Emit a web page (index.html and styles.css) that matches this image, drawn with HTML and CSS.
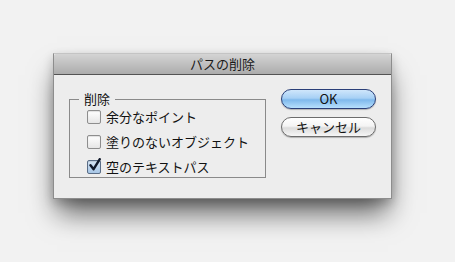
FILE: index.html
```html
<!DOCTYPE html>
<html lang="ja">
  <head>
    <meta charset="UTF-8" />
    <title>パスの削除</title>
    <link rel="stylesheet" href="styles.css">
  </head>
  <body>
    <div class="dialog">
      <div class="titlebar">パスの削除</div>
      <div class="content">
        <fieldset class="group">
          <legend>削除</legend>
          <label class="option"><span class="box"></span>余分なポイント</label>
          <label class="option"><span class="box"></span>塗りのないオブジェクト</label>
          <label class="option"><span class="box checked">
            <svg viewBox="0 0 14 14"><path d="M2.5 7.2 L5.6 11.2 L11.8 1.2" /></svg>
          </span>空のテキストパス</label>
        </fieldset>
        <div class="buttons">
          <button class="btn btn-default">OK</button>
          <button class="btn">キャンセル</button>
        </div>
      </div>
    </div>
  </body>
</html>
```

FILE: styles.css
```css
/* Reset */
* {
  box-sizing: border-box;
  margin: 0;
  padding: 0;
}
html,
body {
  height: 100%;
}
body {
  background: #f2f2f2;
  font-family: "Noto Sans CJK JP", "Liberation Sans", sans-serif;
  font-size: 13px;
  color: #111;
  padding: 53px 0 0 53px;
}

/* Dialog window */
.dialog {
  width: 339px;
  height: 146px;
  background: #ededed;
  border: 1px solid #8d8d8d;
  border-top-color: #c4c4c4;
  box-shadow: 0 18px 26px -4px rgba(0, 0, 0, 0.6), 0 4px 10px rgba(0, 0, 0, 0.2);
  display: flex;
  flex-direction: column;
}
.titlebar {
  height: 21px;
  line-height: 20px;
  text-align: center;
  font-size: 13px;
  color: #1a1a1a;
  background: linear-gradient(#d4d4d4, #acacac);
  border-bottom: 1px solid #535353;
  border-radius: 2px 2px 0 0;
}
.content {
  display: flex;
  padding: 17px 15px 0 15px;
  gap: 15px;
}

/* Group box */
.group {
  width: 197px;
  height: 86px;
  border: 1px solid #8a8a8a;
  padding: 4px 0 0 17px;
  display: flex;
  flex-direction: column;
  gap: 11px;
}
.group legend {
  margin-left: -8px;
  padding: 0 5px;
  font-size: 13px;
  line-height: 14px;
}
.option {
  display: flex;
  align-items: center;
  gap: 5px;
  height: 14px;
  line-height: 14px;
  white-space: nowrap;
}

/* Checkbox */
.box {
  width: 14px;
  height: 14px;
  border: 1px solid #8e8e8e;
  border-radius: 2px;
  background: linear-gradient(#ffffff, #e6e6e6);
  box-shadow: inset 0 1px 1px rgba(0, 0, 0, 0.12);
  position: relative;
}
.box.checked {
  background: linear-gradient(#d6e6f6, #a7c6e6);
  border-color: #5a6d86;
}
.box svg {
  position: absolute;
  left: 0;
  top: -3px;
  width: 14px;
  height: 14px;
  fill: none;
  stroke: #10182a;
  stroke-width: 2.4;
  stroke-linecap: round;
  stroke-linejoin: round;
}

/* Push buttons */
.buttons {
  display: flex;
  flex-direction: column;
  gap: 8px;
  margin-top: -3px;
}
.btn {
  width: 95px;
  height: 20px;
  border-radius: 10px;
  border: 1px solid #6d6d6d;
  background: linear-gradient(#ffffff 0%, #f4f4f4 45%, #dcdcdc 55%, #f6f6f6 100%);
  box-shadow: 0 1px 1px rgba(0, 0, 0, 0.25);
  font-family: "Noto Sans CJK JP", "Liberation Sans", sans-serif;
  font-size: 13px;
  line-height: 18px;
  color: #111;
}
.btn-default {
  border-color: #2a3f78;
  background: linear-gradient(#cfe6fb 0%, #a7d0f5 45%, #7fb9ec 55%, #b7e0fd 100%);
}
```
